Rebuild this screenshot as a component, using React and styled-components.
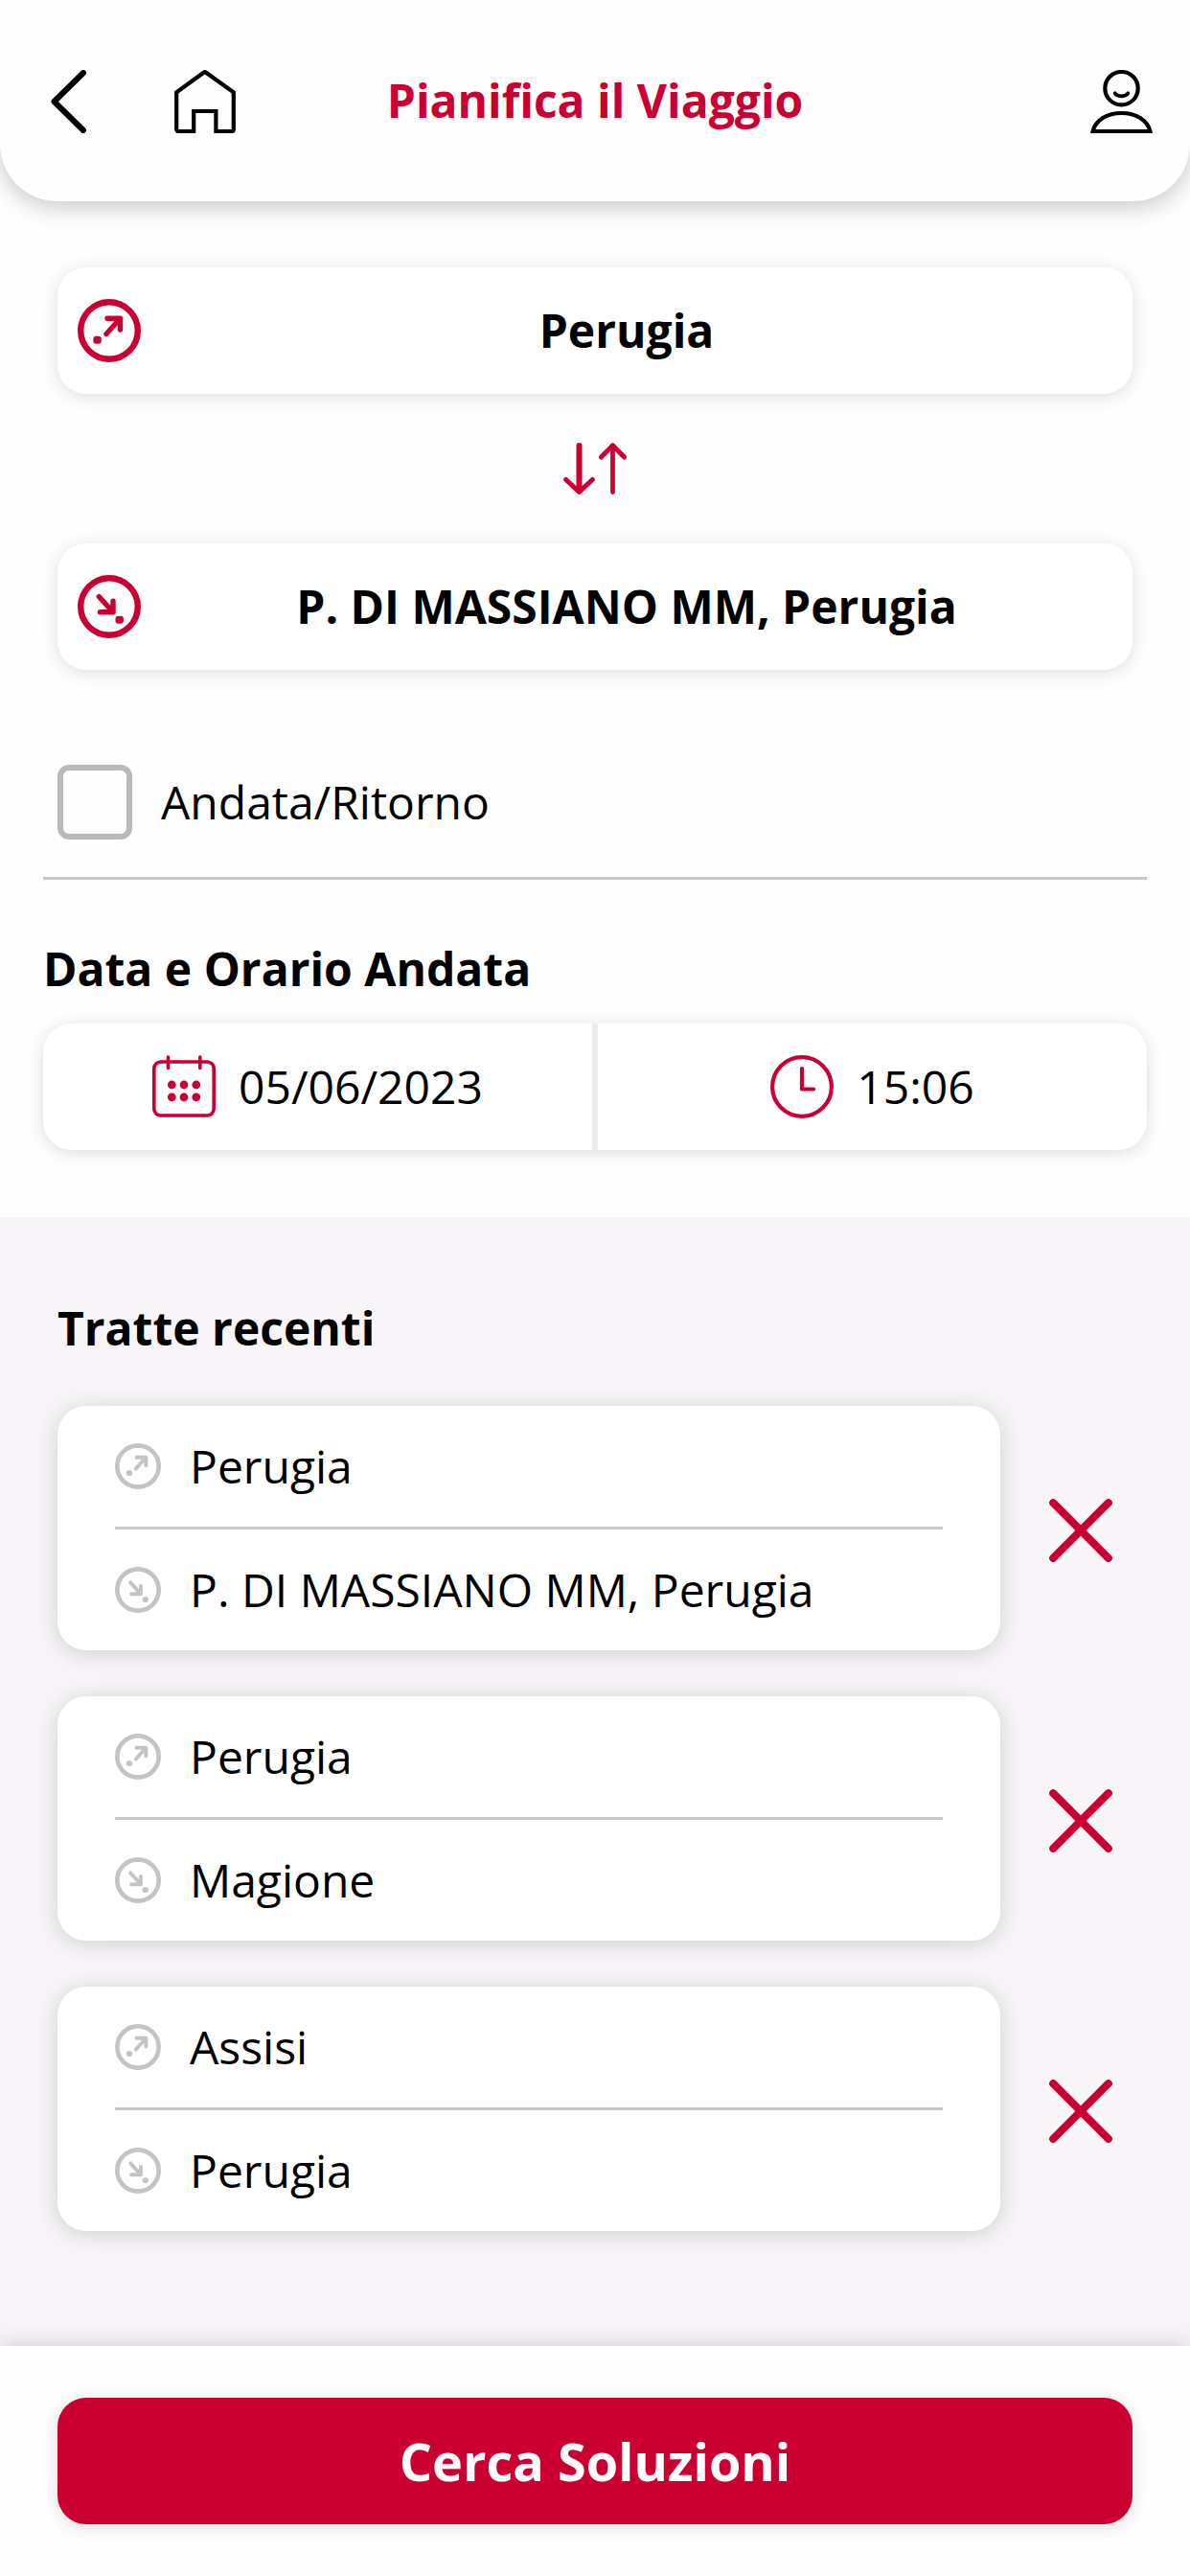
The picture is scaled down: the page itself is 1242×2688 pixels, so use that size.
import React, { useState } from "react";
import styled, { createGlobalStyle } from "styled-components";

const RED = "#c90031";
const GREY = "#c5c3c7";
const LINE = "#c8c8ca";

const GlobalStyle = createGlobalStyle`
  *, *::before, *::after { box-sizing: border-box; }
  body {
    margin: 0;
    background: #fefefe;
    color: #000;
    font-family: "Open Sans", "Noto Sans", sans-serif;
    font-size: 48px;
    line-height: 66px;
  }
  button, input {
    margin: 0;
    padding: 0;
    border: 0;
    background: none;
    color: inherit;
    font: inherit;
  }
  button { cursor: pointer; }
`;

const Page = styled.div`
  display: flex;
  flex-direction: column;
  min-height: 100vh;
`;

const Header = styled.header`
  display: grid;
  grid-template-columns: 1fr auto 1fr;
  align-items: start;
  padding: 73px 38px 71px;
  border-radius: 0 0 60px 60px;
  background: #fefefe;
  box-shadow: 0 6px 24px rgba(20, 0, 20, 0.22);
`;

const HeaderGroup = styled.div`
  display: flex;
  gap: 78px;
  justify-content: ${(p) => (p.$end ? "flex-end" : "flex-start")};
`;

const IconButton = styled.button`
  display: flex;
  align-items: center;
  justify-content: center;
  width: 66px;
  height: 66px;
`;

const Title = styled.h1`
  margin: 0;
  color: ${RED};
  font-size: 48px;
  line-height: 64px;
  font-weight: 700;
`;

const SearchForm = styled.form`
  display: flex;
  flex-direction: column;
  padding: 69px 45px 70px;
`;

const Stations = styled.div`
  display: flex;
  flex-direction: column;
  padding: 0 15px;
`;

const cardShadow = "0 3px 18px rgba(20, 0, 20, 0.13)";

const StationField = styled.label`
  display: flex;
  align-items: center;
  height: 132px;
  padding: 0 21px;
  border-radius: 30px;
  background: #fff;
  box-shadow: ${cardShadow};
`;

const StationInput = styled.input`
  flex: 1;
  min-width: 0;
  font-weight: 700;
  text-align: center;
  outline: none;
`;

const SwapButton = styled.button`
  display: flex;
  align-items: center;
  justify-content: center;
  align-self: center;
  width: 132px;
  height: 156px;
`;

const ReturnRow = styled.div`
  display: flex;
  align-items: center;
  margin-top: 99px;
  padding: 0 15px 39px;
  border-bottom: 3px solid ${LINE};
`;

const CheckBox = styled.input`
  appearance: none;
  flex: none;
  width: 78px;
  height: 78px;
  border: 6px solid #bbb9bc;
  border-radius: 12px;
  background: ${(p) => (p.checked ? RED : "transparent")};
`;

const CheckLabel = styled.label`
  padding-left: 30px;
`;

const SectionTitle = styled.h2`
  margin: 0;
  font-size: 48px;
  line-height: 66px;
  font-weight: 700;
`;

const DateTitle = styled(SectionTitle)`
  margin: 60px 0 24px;
`;

const DateTimeBar = styled.div`
  display: grid;
  grid-template-columns: 1fr 1fr;
  gap: 6px;
  height: 132px;
  border-radius: 30px;
  overflow: hidden;
  background: #ecebee;
  box-shadow: ${cardShadow};
`;

const PickerButton = styled.button`
  display: flex;
  align-items: center;
  justify-content: center;
  gap: 24px;
  background: #fff;
`;

const Recent = styled.section`
  flex: 1;
  padding: 83px 30px 120px 60px;
  background: #f7f5f8;
`;

const RecentList = styled.ul`
  display: flex;
  flex-direction: column;
  gap: 48px;
  margin: 48px 0 0;
  padding: 0;
  list-style: none;
`;

const RecentItem = styled.li`
  display: flex;
`;

const RouteCard = styled.button`
  flex: 1;
  min-width: 0;
  padding: 0 60px;
  border-radius: 30px;
  background: #fff;
  box-shadow: 0 3px 24px rgba(20, 0, 20, 0.16);
  text-align: left;
`;

const RouteStop = styled.span`
  display: flex;
  align-items: center;
  gap: 30px;
  height: 126px;

  & + & {
    height: 129px;
    border-top: 3px solid ${LINE};
  }
`;

const DeleteButton = styled.button`
  display: flex;
  align-items: center;
  justify-content: center;
  width: 168px;
  padding-top: 4px;
`;

const Footer = styled.footer`
  padding: 54px 60px;
  background: #fefefe;
  box-shadow: 0 0 24px rgba(0, 0, 0, 0.18);
`;

const SubmitButton = styled.button`
  width: 100%;
  height: 132px;
  border-radius: 30px;
  background: #ca0030;
  box-shadow: ${cardShadow};
  color: #fff;
  font-size: 54px;
  font-weight: 700;
`;

const Svg = styled.svg`
  display: block;
  flex: none;
  fill: none;
  stroke: currentColor;
  stroke-linecap: round;
  stroke-linejoin: round;
  color: ${(p) => p.$color || "#000"};
`;

function BackIcon() {
  return (
    <Svg width="37" height="66" viewBox="0 0 37 66" strokeWidth="6" aria-hidden="true">
      <path d="M34 3 3.5 33 34 63" />
    </Svg>
  );
}

function HomeIcon() {
  return (
    <Svg width="66" height="66" viewBox="0 0 66 66" strokeWidth="4.2" aria-hidden="true">
      <path
        strokeLinejoin="miter"
        d="M33.1 2.8a2 2 0 0 0-2.6 0L2.2 23.4V62a2 2 0 0 0 2 2h16V43h23.2v21h16.4a2 2 0 0 0 2-2V23.4Z"
      />
    </Svg>
  );
}

function UserIcon() {
  return (
    <Svg width="66" height="66" viewBox="0 0 66 66" strokeWidth="4.2" aria-hidden="true">
      <circle cx="32.5" cy="19.2" r="17.2" />
      <path d="M25.7 24.3c3 4 10.600 4 13.600 0" strokeWidth="3.8" />
      <path strokeLinejoin="miter" d="M2.600 64C5.500 52 17.500 45 32.500 45S59.500 52 62.400 64Z" />
    </Svg>
  );
}

function DepartureIcon({ size = 66, color = RED }) {
  return (
    <Svg width={size} height={size} viewBox="0 0 66 66" $color={color} strokeWidth="5.4" aria-hidden="true">
      <circle cx="33" cy="33" r="29.8" strokeWidth="6.4" />
      <path d="M31 20.300H44.500V32M44.500 20.300 30 36.500" />
      <rect x="16.400" y="38.700" width="8.400" height="8" rx="3" fill="currentColor" stroke="none" />
    </Svg>
  );
}

function ArrivalIcon({ size = 66, color = RED }) {
  return (
    <Svg width={size} height={size} viewBox="0 0 66 66" $color={color} strokeWidth="5.4" aria-hidden="true">
      <circle cx="33" cy="33" r="29.8" strokeWidth="6.4" />
      <path d="M23.500 38.800H37V27.300M37 38.800 22.300 22.500" />
      <rect x="39.500" y="42.800" width="8.400" height="8" rx="3" fill="currentColor" stroke="none" />
    </Svg>
  );
}

function SwapIcon() {
  return (
    <Svg width="66" height="54" viewBox="0 0 66 54" $color={RED} strokeWidth="5" aria-hidden="true">
      <path d="M16.500 3V50" strokeWidth="6" />
      <path d="M2.700 38.500 16.500 51.300 30.300 38.500" />
      <path d="M51.500 3V51.500" strokeWidth="4.800" />
      <path d="M39.500 15 51.500 2.800 63.500 15" strokeWidth="5" />
    </Svg>
  );
}

function CalendarIcon() {
  return (
    <Svg width="66" height="66" viewBox="0 0 66 66" $color={RED} strokeWidth="3.600" aria-hidden="true">
      <rect x="1.800" y="7" width="62.400" height="56" rx="7" />
      <path d="M16.500 2V13.500M49.800 2V13.500" />
      <g fill="currentColor" stroke="none">
        {[20.3, 33, 45.8].map((x) => (
          <React.Fragment key={x}>
            <circle cx={x} cy="31" r="4.400" />
            <circle cx={x} cy="43.800" r="4.400" />
          </React.Fragment>
        ))}
      </g>
    </Svg>
  );
}

function ClockIcon() {
  return (
    <Svg width="66" height="66" viewBox="0 0 66 66" $color={RED} strokeWidth="4.200" aria-hidden="true">
      <circle cx="33" cy="33" r="30.9" />
      <path d="M33 14V35.500H45" />
    </Svg>
  );
}

function CloseIcon() {
  return (
    <Svg width="66" height="66" viewBox="0 0 66 66" $color={RED} strokeWidth="8" aria-hidden="true">
      <path d="M4.200 4.200 61.800 61.800M61.800 4.200 4.200 61.800" />
    </Svg>
  );
}

const recentRoutes = [
  { from: "Perugia", to: "P. DI MASSIANO MM, Perugia" },
  { from: "Perugia", to: "Magione" },
  { from: "Assisi", to: "Perugia" },
];

export default function App() {
  const [route, setRoute] = useState(recentRoutes[0]);
  const [roundTrip, setRoundTrip] = useState(false);
  const [recents, setRecents] = useState(recentRoutes);

  return (
    <Page>
      <GlobalStyle />
      <Header>
        <HeaderGroup>
          <IconButton type="button" aria-label="Indietro">
            <BackIcon />
          </IconButton>
          <IconButton type="button" aria-label="Home">
            <HomeIcon />
          </IconButton>
        </HeaderGroup>
        <Title>Pianifica il Viaggio</Title>
        <HeaderGroup $end>
          <IconButton type="button" aria-label="Profilo">
            <UserIcon />
          </IconButton>
        </HeaderGroup>
      </Header>

      <SearchForm id="search" onSubmit={(e) => e.preventDefault()}>
        <Stations>
          <StationField>
            <DepartureIcon />
            <StationInput
              type="text"
              aria-label="Partenza"
              value={route.from}
              onChange={(e) => setRoute({ ...route, from: e.target.value })}
            />
          </StationField>
          <SwapButton
            type="button"
            aria-label="Inverti stazioni"
            onClick={() => setRoute({ from: route.to, to: route.from })}
          >
            <SwapIcon />
          </SwapButton>
          <StationField>
            <ArrivalIcon />
            <StationInput
              type="text"
              aria-label="Arrivo"
              value={route.to}
              onChange={(e) => setRoute({ ...route, to: e.target.value })}
            />
          </StationField>
        </Stations>

        <ReturnRow>
          <CheckBox
            id="round-trip"
            type="checkbox"
            checked={roundTrip}
            onChange={(e) => setRoundTrip(e.target.checked)}
          />
          <CheckLabel htmlFor="round-trip">Andata/Ritorno</CheckLabel>
        </ReturnRow>

        <DateTitle>Data e Orario Andata</DateTitle>
        <DateTimeBar>
          <PickerButton type="button">
            <CalendarIcon />
            <span>05/06/2023</span>
          </PickerButton>
          <PickerButton type="button">
            <ClockIcon />
            <span>15:06</span>
          </PickerButton>
        </DateTimeBar>
      </SearchForm>

      <Recent>
        <SectionTitle>Tratte recenti</SectionTitle>
        <RecentList>
          {recents.map((item) => (
            <RecentItem key={item.from + item.to}>
              <RouteCard type="button" onClick={() => setRoute(item)}>
                <RouteStop>
                  <DepartureIcon size={48} color={GREY} />
                  <span>{item.from}</span>
                </RouteStop>
                <RouteStop>
                  <ArrivalIcon size={48} color={GREY} />
                  <span>{item.to}</span>
                </RouteStop>
              </RouteCard>
              <DeleteButton
                type="button"
                aria-label="Elimina tratta"
                onClick={() => setRecents(recents.filter((r) => r !== item))}
              >
                <CloseIcon />
              </DeleteButton>
            </RecentItem>
          ))}
        </RecentList>
      </Recent>

      <Footer>
        <SubmitButton type="submit" form="search">
          Cerca Soluzioni
        </SubmitButton>
      </Footer>
    </Page>
  );
}
